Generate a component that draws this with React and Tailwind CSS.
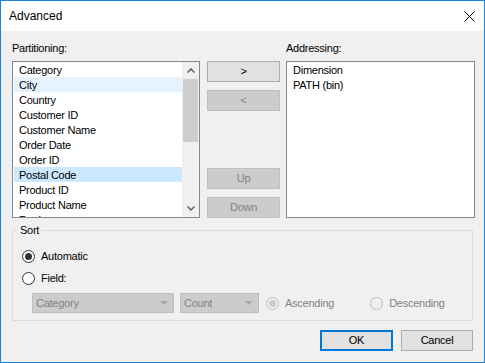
import React from "react";

const leftItems = [
  "Category",
  "City",
  "Country",
  "Customer ID",
  "Customer Name",
  "Order Date",
  "Order ID",
  "Postal Code",
  "Product ID",
  "Product Name",
  "Region",
];

function Radio({ checked, disabled }) {
  const border = disabled ? "border-[#bcbcbc]" : "border-[#333333]";
  const bg = disabled ? "bg-[#f0f0f0]" : "bg-white";
  return (
    <div className={`w-[13px] h-[13px] rounded-full border ${border} ${bg} flex items-center justify-center shrink-0`}>
      {checked && (
        <div className={`w-[7px] h-[7px] rounded-full ${disabled ? "bg-[#cccccc]" : "bg-[#333333]"}`} />
      )}
    </div>
  );
}

function Btn({ children, disabled, className = "" }) {
  return (
    <div
      className={`h-[21px] flex items-center justify-center border ${
        disabled ? "bg-[#cccccc] border-[#bfbfbf] text-[#838383]" : "bg-[#e1e1e1] border-[#adadad] text-black"
      } ${className}`}
    >
      {children}
    </div>
  );
}

function Dropdown({ label, width }) {
  return (
    <div
      className={`h-[20px] ${width} bg-[#cccccc] border border-[#bfbfbf] flex items-center justify-between pl-[3px] pr-[5px] text-[#838383]`}
    >
      <span>{label}</span>
      <svg width="8" height="5" viewBox="0 0 8 5">
        <path d="M0 0 L8 0 L4 4 Z" fill="#a8a8a8" />
      </svg>
    </div>
  );
}

export default function App() {
  return (
    <div
      className="w-[485px] h-[363px] border border-[#1883d7] flex flex-col bg-[#f0f0f0] text-[11px] tracking-[-0.25px] text-black"
      style={{ fontFamily: '"Liberation Sans", Arial, sans-serif' }}
    >
      {/* Title bar */}
      <div className="h-[30px] bg-white flex items-center justify-between pl-[8px] pr-[9px] shrink-0">
        <span className="text-[12px] tracking-normal">Advanced</span>
        <svg width="11" height="11" viewBox="0 0 11 11">
          <path d="M0.5 0.5 L10.5 10.5 M10.5 0.5 L0.5 10.5" stroke="#000" strokeWidth="1" />
        </svg>
      </div>

      {/* Body */}
      <div className="flex-1 flex flex-col pl-[11px] pr-[9px] pt-[9px]">
        <div className="flex">
          {/* Left column */}
          <div className="w-[188px] flex flex-col">
            <div className="h-[15px] leading-[16px]">Partitioning:</div>
            <div className="mt-[6px] h-[157px] border border-[#828790] bg-white flex overflow-hidden">
              <div className="flex-1 flex flex-col overflow-hidden">
                {leftItems.map((it) => (
                  <div
                    key={it}
                    className={`h-[15px] leading-[16px] ml-[1px] pl-[5px] shrink-0 ${
                      it === "City" ? "bg-[#e5f3ff]" : it === "Postal Code" ? "bg-[#cce8ff]" : ""
                    }`}
                  >
                    {it}
                  </div>
                ))}
              </div>
              <div className="w-[17px] bg-[#f0f0f0] flex flex-col shrink-0">
                <div className="h-[17px] flex items-center justify-center">
                  <svg width="8" height="5" viewBox="0 0 8 5">
                    <path d="M0.5 4.5 L4 1 L7.5 4.5" stroke="#606060" strokeWidth="1.5" fill="none" />
                  </svg>
                </div>
                <div className="mx-[1px] h-[63px] bg-[#cdcdcd]" />
                <div className="flex-1" />
                <div className="h-[17px] flex items-center justify-center">
                  <svg width="8" height="5" viewBox="0 0 8 5">
                    <path d="M0.5 0.5 L4 4 L7.5 0.5" stroke="#606060" strokeWidth="1.5" fill="none" />
                  </svg>
                </div>
              </div>
            </div>
          </div>

          {/* Buttons column */}
          <div className="ml-[7px] w-[73px] flex flex-col justify-between pt-[21px]">
            <div className="flex flex-col gap-[8px]">
              <Btn>&gt;</Btn>
              <Btn disabled>&lt;</Btn>
            </div>
            <div className="flex flex-col gap-[8px]">
              <Btn disabled>Up</Btn>
              <Btn disabled>Down</Btn>
            </div>
          </div>

          {/* Right column */}
          <div className="ml-[6px] w-[189px] flex flex-col">
            <div className="h-[15px] leading-[16px]">Addressing:</div>
            <div className="mt-[6px] h-[157px] border border-[#828790] bg-white flex flex-col">
              <div className="h-[15px] leading-[16px] ml-[1px] pl-[5px]">Dimension</div>
              <div className="h-[15px] leading-[16px] ml-[1px] pl-[5px]">PATH (bin)</div>
            </div>
          </div>
        </div>

        {/* Sort group */}
        <div className="relative mt-[12px] h-[91px] mr-[2px] border border-[#dcdcdc] flex flex-col pl-[9px]">
          <span className="absolute left-[5px] top-[-8px] px-[2px] bg-[#f0f0f0] leading-[15px]">Sort</span>
          <div className="mt-[17px] h-[16px] flex items-center gap-[6px]">
            <Radio checked />
            <span>Automatic</span>
          </div>
          <div className="mt-[6px] h-[16px] flex items-center gap-[6px]">
            <Radio />
            <span>Field:</span>
          </div>
          <div className="mt-[7px] ml-[10px] flex items-center">
            <Dropdown label="Category" width="w-[142px]" />
            <div className="ml-[6px]">
              <Dropdown label="Count" width="w-[79px]" />
            </div>
            <div className="ml-[7px] flex items-center gap-[6px] text-[#838383]">
              <Radio checked disabled />
              <span>Ascending</span>
            </div>
            <div className="ml-[36px] flex items-center gap-[6px] text-[#838383]">
              <Radio disabled />
              <span>Descending</span>
            </div>
          </div>
        </div>

        {/* OK / Cancel */}
        <div className="mt-[9px] flex justify-end gap-[8px] pr-[2px]">
          <div className="w-[73px] h-[21px] flex items-center justify-center bg-[#e1e1e1] border-2 border-[#0078d7]">
            OK
          </div>
          <div className="w-[72px] h-[21px] flex items-center justify-center bg-[#e1e1e1] border border-[#adadad]">
            Cancel
          </div>
        </div>
      </div>
    </div>
  );
}
